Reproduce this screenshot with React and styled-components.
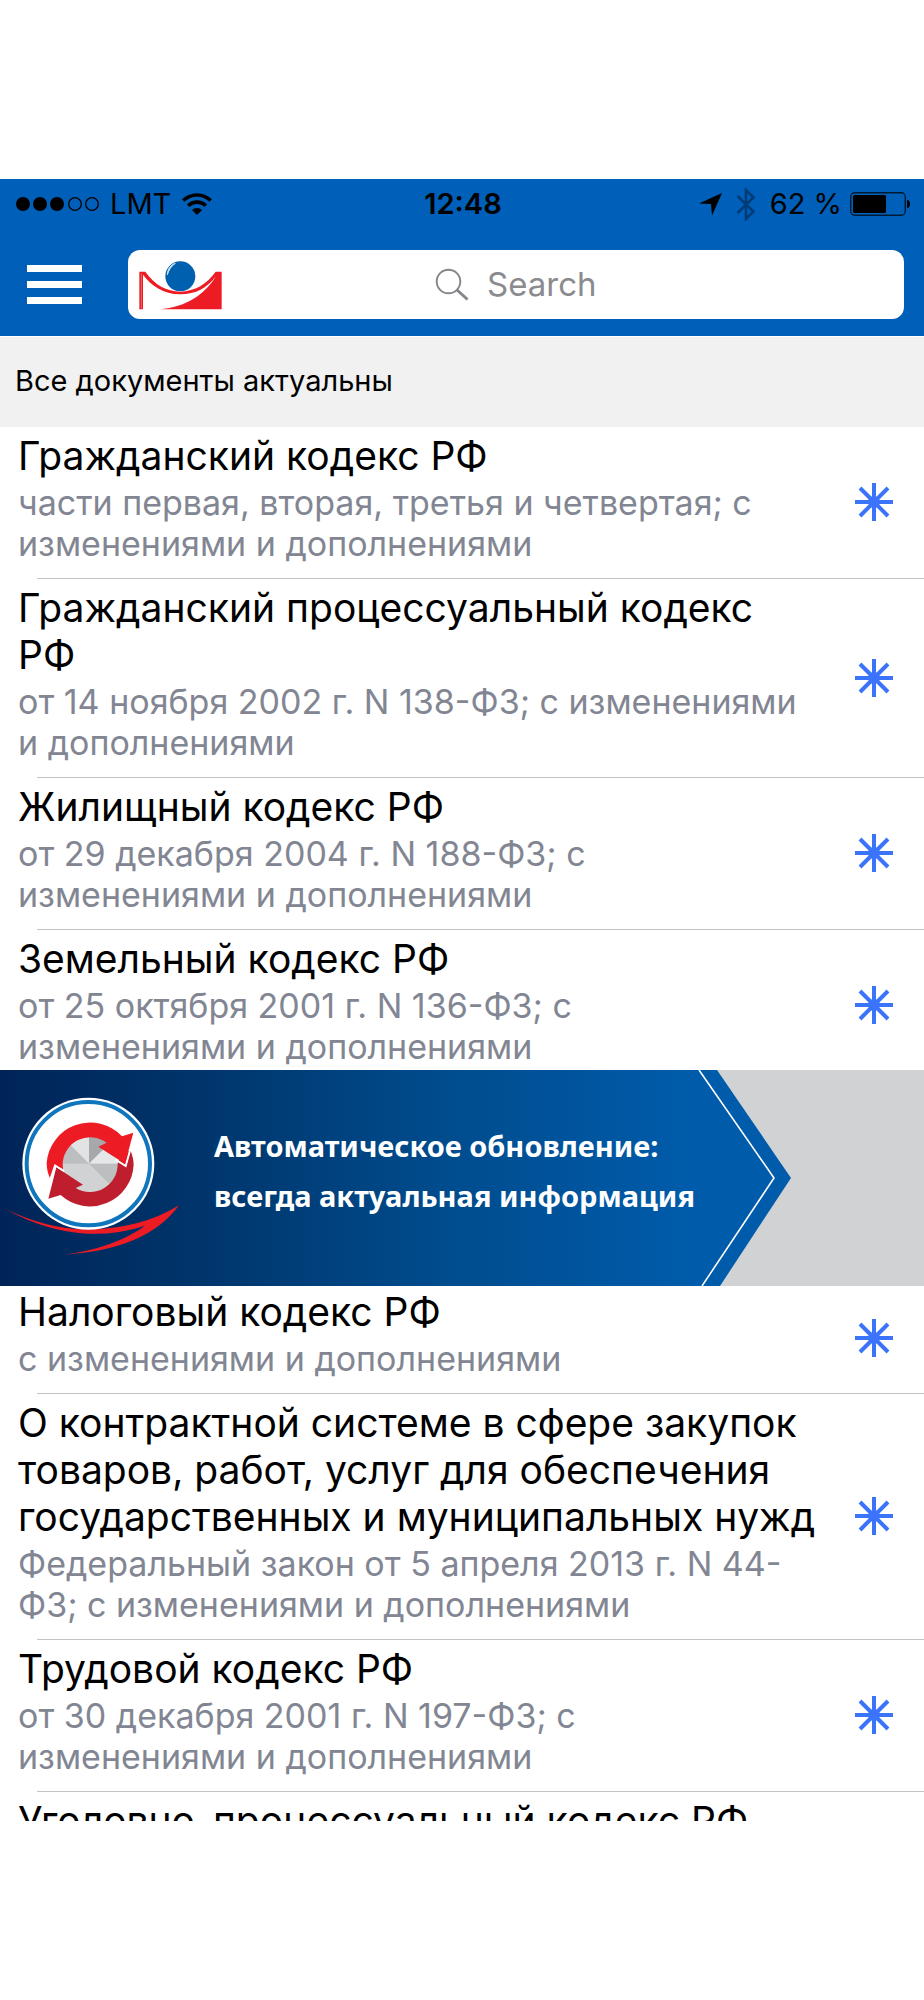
import React from "react";
import styled, { createGlobalStyle, css } from "styled-components";

const GlobalStyle = createGlobalStyle`
  *, *::before, *::after { box-sizing: border-box; }
  body {
    margin: 0;
    background: #fff;
    color: #000;
    font-family: Inter, "Noto Sans", sans-serif;
  }
  h2, p, ul { margin: 0; padding: 0; font-weight: 400; }
  button, input { font: inherit; }
`;

const Page = styled.div`
  height: 100vh;
  padding: 179px 0;
`;

const Screen = styled.div`
  height: 100%;
  overflow: hidden;
  background: #fff;
`;

const Header = styled.header`
  background: #005fb8;
  padding: 0 20px 17px 15px;
`;

const StatusBar = styled.div`
  display: grid;
  grid-template-columns: 1fr auto 1fr;
  align-items: center;
  height: 50px;
  margin-right: -7px;
  font-size: 29px;
  line-height: 36px;
`;

const StatusGroup = styled.div`
  display: flex;
  align-items: center;
  gap: ${(p) => p.$gap}px;
  ${(p) => p.$end && css`justify-content: flex-end;`}
`;

const Clock = styled.time`
  font-weight: 600;
`;

const NavRow = styled.div`
  display: flex;
  align-items: center;
  gap: 46px;
  margin-top: 21px;
`;

const MenuButton = styled.button`
  display: flex;
  flex-direction: column;
  gap: 9px;
  width: 55px;
  margin-left: 12px;
  padding: 0;
  border: 0;
  background: none;
`;

const MenuBar = styled.span`
  height: 7px;
  background: #fff;
`;

const SearchBox = styled.label`
  flex: 1;
  display: grid;
  grid-template-columns: 1fr auto 1fr;
  align-items: center;
  height: 69px;
  padding: 0 11px;
  border-radius: 12px;
  background: #fff;
`;

const SearchField = styled.span`
  display: flex;
  align-items: center;
  gap: 18px;
`;

const SearchInput = styled.input`
  width: 110px;
  padding: 0 0 2px;
  border: 0;
  outline: 0;
  background: none;
  font-size: 33px;
  line-height: 42px;
  &::placeholder { color: #8a8a8f; opacity: 1; }
`;

const Notice = styled.p`
  padding: 25px 15px 28px;
  border-top: 1px solid #fff;
  background: #f1f1f1;
  font-size: 29px;
  line-height: 37px;
`;

const List = styled.ul`
  list-style: none;
`;

const Row = styled.li`
  position: relative;
  display: flex;
  align-items: center;
  justify-content: space-between;
  padding: 0 31px 2px 18px;
  &::after {
    content: "";
    position: absolute;
    left: 37px;
    right: 0;
    bottom: 0;
    height: 1px;
    background: #c4c4c6;
  }
`;

const RowText = styled.div`
  padding: 5px 0 13px;
`;

const RowTitle = styled.h2`
  font-size: 39px;
  line-height: 47px;
  white-space: pre-line;
`;

const RowNote = styled.p`
  margin-top: 3px;
  color: #828693;
  font-size: 34px;
  line-height: 41px;
  white-space: pre-line;
`;

const StarButton = styled.button`
  flex: none;
  display: flex;
  padding: 0;
  border: 0;
  background: none;
`;

const Banner = styled.section`
  position: relative;
  z-index: 1;
  margin: -12px 0 -3px;
  background: #d1d2d4;
`;

const BannerPanel = styled.div`
  position: relative;
  display: flex;
  align-items: center;
  gap: 24px;
  width: 791px;
  max-width: 100%;
  height: 216px;
  background: linear-gradient(90deg, #002458, #00346a 24%, #004b8c 55%, #005cab 88%);
  clip-path: polygon(0 0, calc(100% - 74px) 0, 100% 50%, calc(100% - 71px) 100%, 0 100%);
`;

const BannerText = styled.p`
  padding-bottom: 14px;
  color: #fff;
  font-family: "Noto Sans", "Open Sans", sans-serif;
  font-size: 29px;
  font-weight: 700;
  line-height: 50px;
`;

const BannerEdge = styled.svg`
  position: absolute;
  top: 0;
  right: 0;
`;

function SignalDots() {
  return (
    <svg width="84" height="16" viewBox="0 0 84 16" aria-hidden="true">
      {[8, 25, 42].map((x) => <circle key={x} cx={x} cy="8" r="7" />)}
      {[60, 77].map((x) => (
        <circle key={x} cx={x} cy="8" r="6.3" fill="none" stroke="#000" strokeWidth="1.3" />
      ))}
    </svg>
  );
}

function WifiIcon() {
  return (
    <svg width="30" height="22" viewBox="0 0 30 22" aria-hidden="true">
      <g fill="none" stroke="#000" strokeWidth="3.6">
        <path d="M1.3 7.6a19.4 19.4 0 0 1 27.4 0" />
        <path d="M6.2 12.8a12.4 12.4 0 0 1 17.6 0" />
      </g>
      <path d="M15 22l-5-5a7 7 0 0 1 10 0z" />
    </svg>
  );
}

function LocationIcon() {
  return (
    <svg width="23" height="23" viewBox="0 0 23 23" aria-hidden="true">
      <path d="M23 0L13 22.500L12 11L0 10.500z" />
    </svg>
  );
}

function BluetoothIcon() {
  return (
    <svg width="20" height="33" viewBox="0 0 20 33" aria-hidden="true">
      <path d="M1.500 8L17.500 23.500L10 31V2L17.500 9.500L1.500 25" fill="none" stroke="#003c78" strokeWidth="2.600" />
    </svg>
  );
}

function BatteryIcon() {
  return (
    <svg width="61" height="24" viewBox="0 0 61 24" aria-hidden="true">
      <rect x="0.700" y="0.700" width="54.600" height="22.600" rx="4" fill="none" stroke="#001a33" strokeWidth="1.400" />
      <rect x="3" y="3" width="33" height="18" rx="1.500" />
      <path d="M57 8c4 0 4 8 0 8z" />
    </svg>
  );
}

function BrandLogo() {
  return (
    <svg width="83" height="50" viewBox="418 268 249 150" aria-hidden="true">
      <path
        fill="#ed1c24"
        d="M419 303H437C466 344 500 361 542 363C586 361 622 340 648 303H666V416H480C560 408 612 374 648 318C620 352 590 370 542 371C490 370 455 345 430 312V416H419z"
      />
      <path d="M425 309V414" stroke="#f58a8e" strokeWidth="2" />
      <circle cx="542" cy="317" r="45" fill="#0060b0" />
      <path d="M503 312C504 295 513 283 527 278C513 288 508 298 503 312z" fill="#fff" stroke="#d5e6f5" strokeWidth="3" />
    </svg>
  );
}

function SearchIcon() {
  return (
    <svg width="34" height="34" viewBox="0 0 34 34" fill="none" stroke="#85868a" aria-hidden="true">
      <circle cx="13.500" cy="13.500" r="11.800" strokeWidth="1.900" />
      <path d="M21.500 21.500L32.500 31.500" strokeWidth="3" />
    </svg>
  );
}

function StarIcon() {
  return (
    <svg width="38" height="38" viewBox="0 0 38 38" stroke="#3b74fb" strokeWidth="4" aria-hidden="true">
      <path d="M19 0V38M0 19H38M5 5L33 33M33 5L5 33" />
      <circle cx="19" cy="19" r="4" fill="#3b74fb" />
    </svg>
  );
}

function UpdateEmblem() {
  return (
    <svg width="190" height="215" viewBox="0 33 570 645" aria-hidden="true">
      <path
        fill="#ed1c24"
        d="M15 447Q150 510 262 508Q420 508 537 436Q440 570 190 584Q340 565 436 497Q350 525 260 521Q140 515 15 447z"
      />
      <circle cx="265" cy="311" r="198" fill="#fff" />
      <circle cx="265" cy="311" r="185" fill="#fff" stroke="#0f75bc" strokeWidth="12" />
      <circle cx="270" cy="311" r="86" fill="#d1d2d4" />
      <path d="M267 311L206 250A86 86 0 0 1 267 225z" fill="#e2e3e4" />
      <path d="M267 311V225A86 86 0 0 1 329 250z" fill="#a6a8ab" />
      <path d="M267 311L329 250A86 86 0 0 1 356 311z" fill="#e6e7e8" />
      <path d="M267 311H356A86 86 0 0 1 329 373z" fill="#bcbec0" />
      <path d="M267 311H184A86 86 0 0 1 206 250z" fill="#bcbec0" />
      <path
        fill="#be1e2d"
        d="M391 270Q401 295 401 314A131 131 0 0 1 182 405L145 416L169 322L249 374L227 384A83 83 0 0 0 353 311L360 290z"
      />
      <path d="M391 268L377 318L347 299" fill="none" stroke="#fff" strokeWidth="6" />
      <path
        fill="#ed1c24"
        d="M151 357Q140 335 140 309A131 131 0 0 1 366 229L400 218L375 311L295 260L320 248A83 83 0 0 0 188 309L189 328L164 314z"
      />
      <path d="M148 365L165 316L193 334" fill="none" stroke="#fff" strokeWidth="5" />
    </svg>
  );
}

const CODES = [
  {
    title: "Гражданский кодекс РФ",
    note: "части первая, вторая, третья и четвертая; с\nизменениями и дополнениями",
  },
  {
    title: "Гражданский процессуальный кодекс\nРФ",
    note: "от 14 ноября 2002 г. N 138-ФЗ; с изменениями\nи дополнениями",
  },
  {
    title: "Жилищный кодекс РФ",
    note: "от 29 декабря 2004 г. N 188-ФЗ; с\nизменениями и дополнениями",
  },
  {
    title: "Земельный кодекс РФ",
    note: "от 25 октября 2001 г. N 136-ФЗ; с\nизменениями и дополнениями",
  },
];

const MORE_CODES = [
  { title: "Налоговый кодекс РФ", note: "с изменениями и дополнениями" },
  {
    title: "О контрактной системе в сфере закупок\nтоваров, работ, услуг для обеспечения\nгосударственных и муниципальных нужд",
    note: "Федеральный закон от 5 апреля 2013 г. N 44-\nФЗ; с изменениями и дополнениями",
  },
  {
    title: "Трудовой кодекс РФ",
    note: "от 30 декабря 2001 г. N 197-ФЗ; с\nизменениями и дополнениями",
  },
  { title: "Уголовно-процессуальный кодекс РФ" },
];

function DocumentList({ items }) {
  return (
    <List>
      {items.map(({ title, note }) => (
        <Row key={title}>
          <RowText>
            <RowTitle>{title}</RowTitle>
            {note && <RowNote>{note}</RowNote>}
          </RowText>
          {note && (
            <StarButton type="button" aria-label="В избранное">
              <StarIcon />
            </StarButton>
          )}
        </Row>
      ))}
    </List>
  );
}

export default function App() {
  return (
    <Page>
      <GlobalStyle />
      <Screen>
        <Header>
          <StatusBar>
            <StatusGroup $gap={11}>
              <SignalDots />
              <span>LMT</span>
              <WifiIcon />
            </StatusGroup>
            <Clock>12:48</Clock>
            <StatusGroup $gap={14} $end>
              <LocationIcon />
              <BluetoothIcon />
              <StatusGroup $gap={8}>
                <span>62 %</span>
                <BatteryIcon />
              </StatusGroup>
            </StatusGroup>
          </StatusBar>
          <NavRow>
            <MenuButton type="button" aria-label="Меню">
              <MenuBar />
              <MenuBar />
              <MenuBar />
            </MenuButton>
            <SearchBox>
              <BrandLogo />
              <SearchField>
                <SearchIcon />
                <SearchInput type="text" placeholder="Search" aria-label="Search" />
              </SearchField>
            </SearchBox>
          </NavRow>
        </Header>
        <Notice>Все документы актуальны</Notice>
        <DocumentList items={CODES} />
        <Banner>
          <BannerPanel>
            <UpdateEmblem />
            <BannerText>
              Автоматическое обновление:
              <br />
              всегда актуальная информация
            </BannerText>
            <BannerEdge width="94" height="216" viewBox="0 0 94 216" aria-hidden="true">
              <path d="M2 0L77 108L5 216" fill="none" stroke="#fff" strokeWidth="1.600" />
            </BannerEdge>
          </BannerPanel>
        </Banner>
        <DocumentList items={MORE_CODES} />
      </Screen>
    </Page>
  );
}
